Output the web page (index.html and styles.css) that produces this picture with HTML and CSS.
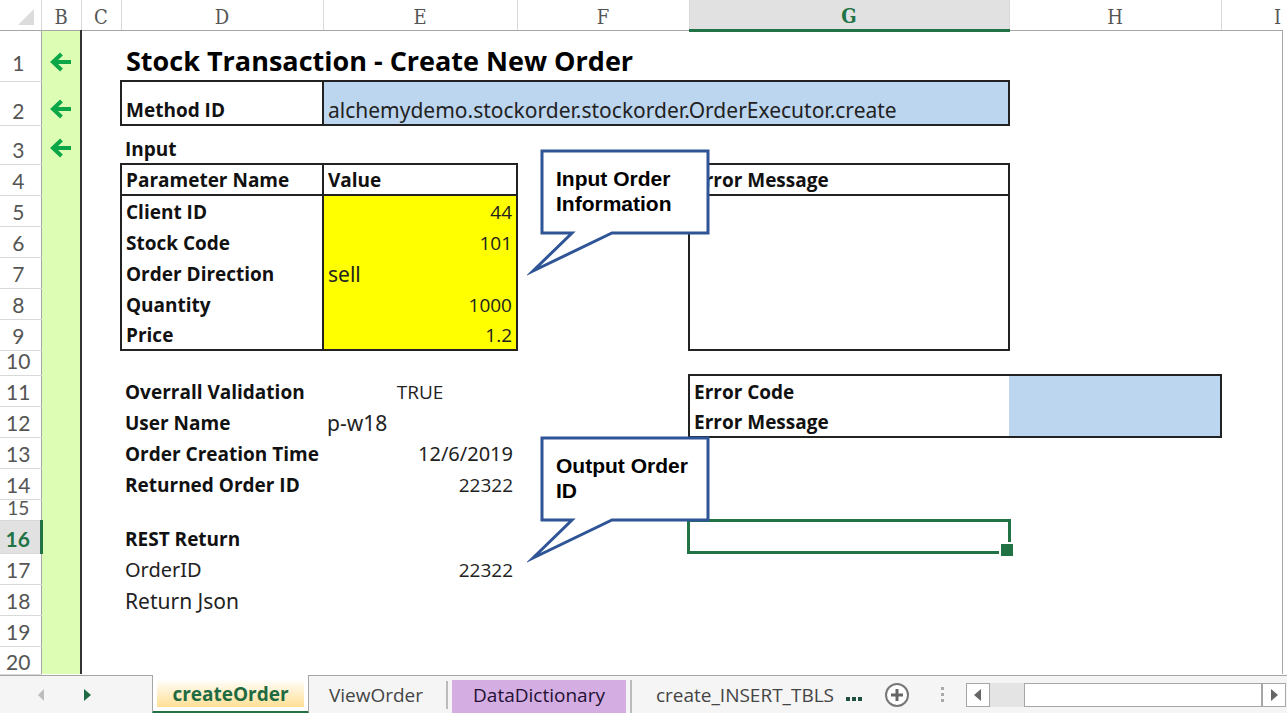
FILE: index.html
```html
<!DOCTYPE html>
<html lang="en">
<head>
<meta charset="utf-8">
<title>Stock Transaction - Create New Order</title>
<link rel="stylesheet" href="styles.css">
</head>
<body>
<main class="sheet">
  <table class="grid">
    <colgroup>
      <col class="w-head"><col class="w-b"><col class="w-c"><col class="w-d"><col class="w-e"><col class="w-f"><col class="w-g"><col class="w-h"><col>
    </colgroup>
    <thead>
      <tr>
        <th class="corner"><svg width="16" height="16" viewBox="0 0 16 16" aria-hidden="true"><path d="M16 0V16H0Z" fill="#dcdcdc"/></svg></th>
        <th>B</th><th>C</th><th>D</th><th>E</th><th>F</th><th class="current">G</th><th>H</th><th class="last">I</th>
      </tr>
    </thead>
    <tbody>
      <tr class="r-title"><th>1</th><td class="mark"><svg class="arrow" viewBox="0 0 22 20"><path d="M11.5 2L3 10L11.5 18M3 10H21"/></svg></td><td></td><td class="title" colspan="5">Stock Transaction - Create New Order</td><td class="edge"></td></tr>
      <tr class="r-method"><th>2</th><td class="mark"><svg class="arrow" viewBox="0 0 22 20"><path d="M11.5 2L3 10L11.5 18M3 10H21"/></svg></td><td></td><td class="label box">Method ID</td><td class="text box blue" colspan="3">alchemydemo.stockorder.stockorder.OrderExecutor.create</td><td></td><td class="edge"></td></tr>
      <tr class="r-input"><th>3</th><td class="mark"><svg class="arrow" viewBox="0 0 22 20"><path d="M11.5 2L3 10L11.5 18M3 10H21"/></svg></td><td></td><td class="label">Input</td><td></td><td></td><td></td><td></td><td class="edge"></td></tr>
      <tr><th>4</th><td class="mark"></td><td></td><td class="label box">Parameter Name</td><td class="label box">Value</td><td></td><td class="label box">Error Message</td><td></td><td class="edge"></td></tr>
      <tr><th>5</th><td class="mark"></td><td></td><td class="label side">Client ID</td><td class="side yellow num">44</td><td></td><td class="box" rowspan="5"></td><td></td><td class="edge"></td></tr>
      <tr><th>6</th><td class="mark"></td><td></td><td class="label side">Stock Code</td><td class="side yellow num">101</td><td></td><td></td><td class="edge"></td></tr>
      <tr><th>7</th><td class="mark"></td><td></td><td class="label side">Order Direction</td><td class="text side yellow">sell</td><td></td><td></td><td class="edge"></td></tr>
      <tr><th>8</th><td class="mark"></td><td></td><td class="label side">Quantity</td><td class="side yellow num">1000</td><td></td><td></td><td class="edge"></td></tr>
      <tr><th>9</th><td class="mark"></td><td></td><td class="label side foot">Price</td><td class="side foot yellow num">1.2</td><td></td><td></td><td class="edge"></td></tr>
      <tr class="r-ten"><th>10</th><td class="mark"></td><td></td><td></td><td></td><td></td><td></td><td></td><td class="edge"></td></tr>
      <tr><th>11</th><td class="mark"></td><td></td><td class="label">Overrall Validation</td><td class="mid">TRUE</td><td></td><td class="label top left">Error Code</td><td class="blue top right"></td><td class="edge"></td></tr>
      <tr><th>12</th><td class="mark"></td><td></td><td class="label">User Name</td><td class="text">p-w18</td><td></td><td class="label foot left">Error Message</td><td class="blue foot right"></td><td class="edge"></td></tr>
      <tr><th>13</th><td class="mark"></td><td></td><td class="label">Order Creation Time</td><td class="date num">12/6/2019</td><td></td><td></td><td></td><td class="edge"></td></tr>
      <tr><th>14</th><td class="mark"></td><td></td><td class="label">Returned Order ID</td><td class="num">22322</td><td></td><td></td><td></td><td class="edge"></td></tr>
      <tr class="r-short"><th>15</th><td class="mark"></td><td></td><td></td><td></td><td></td><td></td><td></td><td class="edge"></td></tr>
      <tr class="r-current"><th class="current">16</th><td class="mark"></td><td></td><td class="label">REST Return</td><td></td><td></td><td class="selected"><div class="selection"></div></td><td></td><td class="edge"></td></tr>
      <tr><th>17</th><td class="mark"></td><td></td><td class="date">OrderID</td><td class="num">22322</td><td></td><td></td><td></td><td class="edge"></td></tr>
      <tr><th>18</th><td class="mark"></td><td></td><td class="text">Return Json</td><td></td><td></td><td></td><td></td><td class="edge"></td></tr>
      <tr><th>19</th><td class="mark"></td><td></td><td></td><td></td><td></td><td></td><td></td><td class="edge"></td></tr>
      <tr class="r-last"><th>20</th><td class="mark"></td><td></td><td></td><td></td><td></td><td></td><td></td><td class="edge"></td></tr>
    </tbody>
  </table>
  <aside class="callout callout-input">
    <svg class="bubble" viewBox="0 0 184 128" aria-hidden="true"><path d="M15 2H181V84H85L6 122L45 84H15Z"/></svg>
    <p>Input Order Information</p>
  </aside>
  <aside class="callout callout-output">
    <svg class="bubble" viewBox="0 0 184 128" aria-hidden="true"><path d="M15 2H181V84H85L6 122L45 84H15Z"/></svg>
    <p>Output Order ID</p>
  </aside>
</main>
<footer class="tabbar">
  <div class="nav">
    <button aria-label="Previous sheets"><svg width="8" height="12" viewBox="0 0 8 12"><path d="M7 0V12L1 6Z" fill="#bdbdbd"/></svg></button>
    <button aria-label="Next sheets"><svg width="8" height="12" viewBox="0 0 8 12"><path d="M1 0V12L8 6Z" fill="#1e6b45"/></svg></button>
  </div>
  <nav class="tabs">
    <button class="tab active"><span>createOrder</span></button>
    <button class="tab view">ViewOrder</button>
    <button class="tab purple"><span>DataDictionary</span></button>
    <button class="tab insert">create_INSERT_TBLS</button>
    <button class="more" aria-label="More sheets"><svg width="17" height="4" viewBox="0 0 17 4"><path d="M0 0h4v4H0zM6 0h4v4H6zM12 0h4v4h-4z" fill="#1f5040"/></svg></button>
  </nav>
  <button class="add" aria-label="New sheet"><svg width="26" height="26" viewBox="0 0 26 26"><circle cx="13" cy="13" r="11" fill="#fff" stroke="#777" stroke-width="2"/><path d="M13 7V19M7 13H19" stroke="#666" stroke-width="3"/></svg></button>
  <svg class="grip" width="4" height="16" viewBox="0 0 4 16" aria-hidden="true"><path d="M0 0h3v3H0zM0 6h3v3H0zM0 12h3v3H0z" fill="#aaa"/></svg>
  <div class="scroll">
    <button class="step" aria-label="Scroll left"><svg width="8" height="12" viewBox="0 0 8 12"><path d="M7 0V12L0 6Z" fill="#666"/></svg></button>
    <div class="track"><div class="thumb"></div></div>
    <button class="step" aria-label="Scroll right"><svg width="8" height="12" viewBox="0 0 8 12"><path d="M1 0V12L8 6Z" fill="#666"/></svg></button>
  </div>
</footer>
</body>
</html>
```
FILE: styles.css
```css
* { box-sizing: border-box; }
body {
  margin: 0;
  min-height: 100vh;
  display: flex;
  flex-direction: column;
  background: #fff;
  color: #222;
  font-family: "Open Sans", "Noto Sans", sans-serif;
  font-size: 19px;
}
button {
  border: 0;
  padding: 0;
  background: none;
  font: inherit;
  color: inherit;
}
svg { display: block; }

.sheet { position: relative; flex: 1; overflow: hidden; }
.grid { width: 100%; table-layout: fixed; border-collapse: collapse; }
.w-head { width: 41px; }
.w-b, .w-c { width: 40px; }
.w-d { width: 202px; }
.w-e { width: 194px; }
.w-f { width: 172px; }
.w-g { width: 320px; }
.w-h { width: 212px; }

.grid tr { height: 31px; }
.grid th, .grid td { padding: 0 4px; line-height: 28px; vertical-align: bottom; white-space: nowrap; }
.grid td { text-align: left; }

.grid thead tr { height: 30px; }
.grid thead th {
  border-right: 1px solid #d9d9d9;
  border-bottom: 1px solid #a6a6a6;
  color: #555;
  font: 20px/26px "DejaVu Serif Condensed", "DejaVu Serif", serif;
  text-align: center;
}
.grid thead .corner { padding: 0 6px 5px 18px; }
.grid thead .last { text-align: right; border-right: 0; }
.grid thead .current {
  background: #e1e1e1;
  border-bottom: 3px solid #217346;
  color: #217346;
  font-weight: bold;
}
.grid tbody th {
  padding: 0 4px 4px 0;
  border-right: 1px solid #a6a6a6;
  border-bottom: 1px solid #d9d9d9;
  color: #555;
  font-family: Lato, sans-serif;
  font-size: 21px;
  font-weight: normal;
  line-height: 20px;
  text-align: center;
}
.grid tbody .current {
  background: #e1e1e1;
  border-right: 3px solid #217346;
  color: #217346;
  font-weight: bold;
}
.grid .r-title { height: 51px; }
.grid .r-title th { padding-bottom: 8px; }
.grid .r-method { height: 44px; }
.grid .r-input { height: 39px; }
.grid .r-ten { height: 24px; }
.grid .r-ten td, .grid .r-short td { line-height: 16px; }
.grid .r-short { height: 21px; }
.grid .r-short th { font-size: 19px; line-height: 16px; padding-bottom: 4px; }
.grid .r-current { height: 33px; }
.grid .r-last { height: 28px; }
.grid .r-last td { line-height: 20px; }
.grid .r-last th { padding-bottom: 2px; }

.grid .mark { background: #ddfdb4; border-right: 2px solid #333; padding: 0 0 6px; }
.arrow { width: 22px; height: 20px; margin: 0 auto; fill: none; stroke: #0aa648; stroke-width: 4; }
.r-title .mark { vertical-align: middle; padding: 12px 0 0; }
.grid .edge { border-right: 4px solid #fff; box-shadow: inset -1px 0 #a6a6a6; }

.title { color: #000; font-size: 27px; font-weight: bold; }
.grid .title { line-height: 36px; padding: 0 5px 1px; }
.label { color: #111; font-weight: bold; }
.text, .date { font-family: "Noto Sans", "Open Sans", sans-serif; font-size: 21px; }
.date { font-size: 20px; }
.box { border: 2px solid #222; }
.side { border-left: 2px solid #222; border-right: 2px solid #222; }
.top { border-top: 2px solid #222; }
.foot { border-bottom: 2px solid #222; }
.left { border-left: 2px solid #222; }
.right { border-right: 2px solid #222; }
.blue { background: #bdd6f0; }
.yellow { background: #ff0; }
.grid .num { text-align: right; }
.grid .mid { text-align: center; }

.grid .selected { position: relative; padding: 0; }
.selection { position: absolute; inset: -1px -2px; border: 3px solid #217346; }
.selection::after {
  content: "";
  position: absolute;
  right: -7px;
  bottom: -7px;
  width: 12px;
  height: 12px;
  background: #217346;
  border: 2px solid #fff;
}

.callout { position: absolute; left: 527px; width: 184px; height: 128px; }
.callout-input { top: 149px; }
.callout-output { top: 436px; }
.bubble { position: absolute; inset: 0; fill: #fff; stroke: #2f5597; stroke-width: 3; stroke-miterlimit: 10; }
.callout p {
  position: relative;
  margin: 0;
  padding: 17px 0 0 29px;
  color: #000;
  font: bold 21px/25px "Liberation Sans", Arial, sans-serif;
}

.tabbar { display: flex; align-items: center; height: 39px; border-top: 1px solid #a6a6a6; background: #f5f5f5; }
.nav { display: flex; justify-content: space-between; width: 152px; padding: 0 61px 0 37px; }
.tabs { display: flex; align-self: stretch; }
.tab { display: flex; align-items: center; justify-content: center; color: #444; }
.tab.active {
  width: 157px;
  margin-top: -1px;
  padding: 4px;
  border: solid #a6a6a6;
  border-width: 0 1px;
  border-bottom: 3px solid #217346;
  background: #fff;
  color: #1f6b41;
  font-weight: bold;
}
.tab.active span { flex: 1; align-self: stretch; line-height: 30px; background: linear-gradient(#fff, #ffdf94); }
.tab.view { width: 139px; margin: 5px 0; padding-right: 3px; border-right: 2px solid #bbb; }
.tab.purple { width: 184px; margin: 4px 0 1px; padding: 0 4px; color: #221033; border-right: 2px solid #bbb; }
.tab.purple span { flex: 1; align-self: stretch; line-height: 30px; background: #d4aee2; }
.tab.insert { width: 214px; padding-left: 12px; }
.more { padding-top: 8px; }
.add { margin-left: 21px; }
.grip { margin-left: 31px; }
.scroll { display: flex; flex: 1; height: 24px; margin: 0 1px 0 21px; }
.step { display: flex; align-items: center; justify-content: center; width: 24px; border: 1px solid #a6a6a6; background: #fff; }
.track { flex: 1; padding-left: 34px; background: #e4e4e4; }
.thumb { height: 100%; border: 1px solid #a6a6a6; background: #fff; }
```
